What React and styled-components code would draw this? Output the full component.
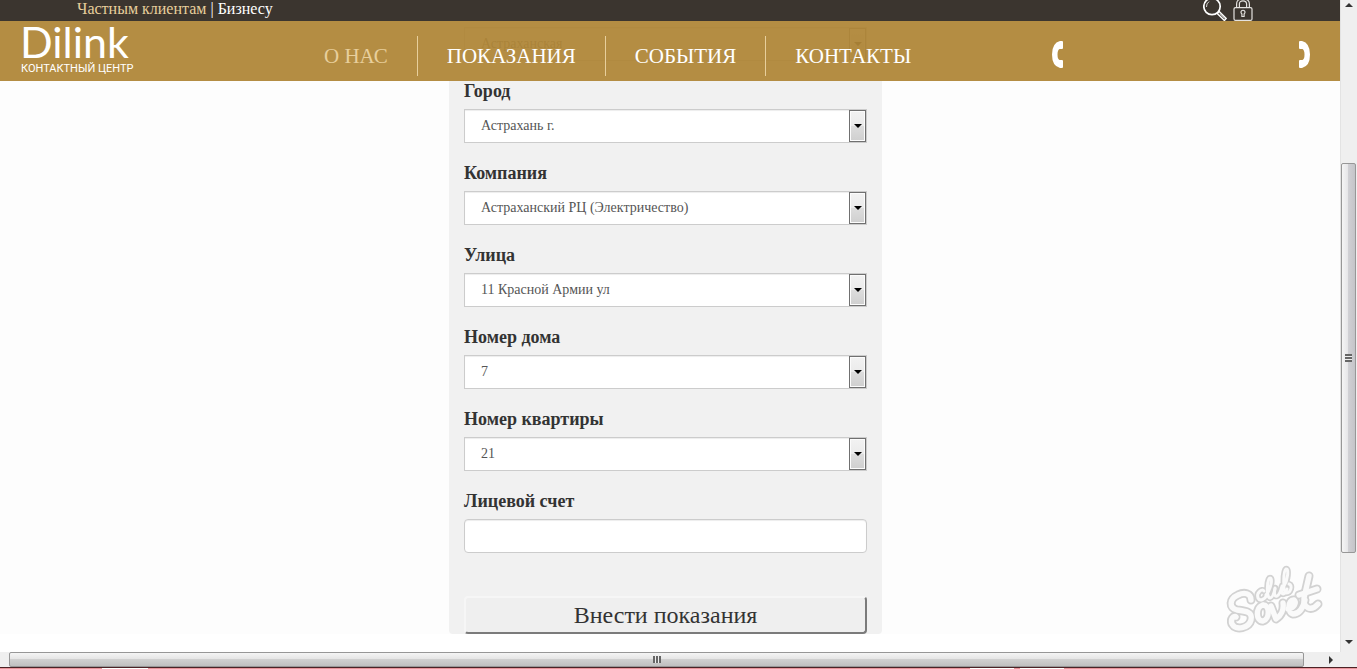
import React, { useState } from 'react';
import styled, { createGlobalStyle } from 'styled-components';

const serif = '"Liberation Serif", "Times New Roman", serif';
const logoFont = 'Lato, "Open Sans", sans-serif';

const fields = [
  { id: 'region', label: 'Область', value: 'Астраханская', hidden: true },
  { id: 'city', label: 'Город', value: 'Астрахань г.' },
  { id: 'company', label: 'Компания', value: 'Астраханский РЦ (Электричество)' },
  { id: 'street', label: 'Улица', value: '11 Красной Армии ул' },
  { id: 'house', label: 'Номер дома', value: '7' },
  { id: 'flat', label: 'Номер квартиры', value: '21' },
];

const SearchIcon = () => (
  <svg width="24" height="21" viewBox="0 0 24 21" fill="none" stroke="#fff">
    <circle cx="9" cy="6.5" r="8.2" strokeWidth="1.7" />
    <path d="M3.5 7A6 6 0 0 1 6 1.6" strokeWidth="0.8" />
    <path d="M14.2 13.4l2-2 7 7-1.8 2.1z" strokeWidth="1.4" />
    <path d="M16.5 13.7l5 5" strokeWidth="0.7" />
  </svg>
);

const LockIcon = () => (
  <svg width="20" height="21" viewBox="0 0 20 21" fill="none" stroke="#e4e2df" strokeWidth="1.2">
    <rect x="1" y="7.6" width="18" height="12.8" rx="1.5" />
    <path d="M3.6 7.5V4C3.6 1 5-1 10-1s6.400 2 6.400 5v3.500M6.400 7.500V4c0-2 1.200-3.200 3.600-3.200s3.600 1.200 3.600 3.200v3.500" />
    <path d="M8.900 16.500v-2.600a2 2 0 1 1 2.200 0v2.600z" />
  </svg>
);

const PhoneIcon = ({ flip }) => (
  <svg width="11" height="27" viewBox="0 0 11 27" fill="#fff">
    <path
      transform={flip ? 'matrix(-1 0 0 1 11 0)' : undefined}
      d="M8 0h2Q11 0 11 1v6Q11 8 10 8H7.500Q5.500 9 5.500 13.500T7.500 19H10Q11 19 11 20v6Q11 27 10 27H8Q0 25 0 13.500T8 0z"
    />
  </svg>
);

const Arrow = ({ dir }) => {
  const d = {
    up: 'M0 6L4 2l4 4z',
    down: 'M0 2l4 4 4-4z',
    right: 'M2 0l4 4-4 4z',
  };
  return <svg width="8" height="8" viewBox="0 0 8 8" fill="#333"><path d={d[dir]} /></svg>;
};

// handwritten lettering: grey outline first, pale core over it
const bigStrokes = [
  'M29 38C29 31 22 30 16 33C7 37 7 46 15 48C24 49 31 50 29 58C27 66 14 69 10 62C8 57 12 53 14 55',
  'M41 43C33 45 34 60 41 59C48 57 48 43 41 43',
  'M49 44L54 57C59 54 62 48 61 41',
  'M66 47C72 46 75 41 72 38C66 37 65 51 71 52C77 52 81 46 83 38',
  'M77 33L95 27',
  'M87 14L82 36C81 46 89 50 96 42',
];
const smallStrokes = [
  'M42 29C40 26 34 31 36 36C38 40 43 37 45 33',
  'M44 33C49 27 51 16 48 16C45 16 44 36 48 36C50 36 52 31 53 27',
  'M53 26C52 31 52 35 55 34C58 33 59 28 60 24L60 31C61 34 64 30 65 27',
  'M62 24C66 18 67 6 64 7C61 9 61 30 64 31C69 31 71 23 67 22',
];

const Watermark = () => (
  <svg width="105" height="75" viewBox="0 0 105 75" fill="none" strokeLinecap="round" strokeLinejoin="round">
    <g stroke="#d2d2d2">
      {bigStrokes.map((d) => <path key={d} d={d} strokeWidth="9" />)}
      {smallStrokes.map((d) => <path key={d} d={d} strokeWidth="6.4" />)}
    </g>
    <g stroke="#fafafa">
      {bigStrokes.map((d) => <path key={d} d={d} strokeWidth="5.4" />)}
      {smallStrokes.map((d) => <path key={d} d={d} strokeWidth="3" />)}
    </g>
  </svg>
);

function App() {
  const [account, setAccount] = useState('');

  return (
    <Frame>
      <GlobalStyle />
      <Viewport>
        <Header>
          <TopBar>
            <Audience>
              <TopLink href="#private" $active>Частным клиентам</TopLink>
              <i>|</i>
              <TopLink href="#business">Бизнесу</TopLink>
            </Audience>
            <Tools>
              <IconButton aria-label="Поиск"><SearchIcon /></IconButton>
              <IconButton aria-label="Вход"><LockIcon /></IconButton>
            </Tools>
          </TopBar>
          <NavBar>
            <Logo href="#home">
              <LogoName>Dilink</LogoName>
              <LogoSub>КОНТАКТНЫЙ ЦЕНТР</LogoSub>
            </Logo>
            <Nav>
              <NavLink href="#about" $active>О НАС</NavLink>
              <NavLink href="#readings">ПОКАЗАНИЯ</NavLink>
              <NavLink href="#events">СОБЫТИЯ</NavLink>
              <NavLink href="#contacts">КОНТАКТЫ</NavLink>
            </Nav>
            <Phones>
              <PhoneIcon />
              <PhoneIcon flip />
            </Phones>
          </NavBar>
        </Header>
        <Content>
          <Form onSubmit={(e) => e.preventDefault()}>
            {fields.map(({ id, label, value, hidden }) => (
              <React.Fragment key={id}>
                {!hidden && <Label htmlFor={id}>{label}</Label>}
                <SelectBox>
                  <Select id={id} aria-label={label} defaultValue={value}>
                    <option>{value}</option>
                  </Select>
                  <DropMark><Arrow dir="down" /></DropMark>
                </SelectBox>
              </React.Fragment>
            ))}
            <Label htmlFor="account">Лицевой счет</Label>
            <Input id="account" value={account} onChange={(e) => setAccount(e.target.value)} />
            <Submit type="submit">Внести показания</Submit>
          </Form>
        </Content>
        <Mark><Watermark /></Mark>
      </Viewport>
      <VScroll>
        <Arrow dir="up" />
        <VTrack>
          <VThumb><Grip $vertical /></VThumb>
        </VTrack>
        <Arrow dir="down" />
      </VScroll>
      <HScroll>
        <HThumb><Grip /></HThumb>
        <Arrow dir="right" />
      </HScroll>
      <Edge />
    </Frame>
  );
}

const GlobalStyle = createGlobalStyle`
  * {
    box-sizing: border-box;
  }
  body {
    margin: 0;
    background: #fff;
    font-family: ${serif};
  }
  svg {
    display: block;
    flex: none;
  }
`;

const Frame = styled.div`
  display: grid;
  grid-template-columns: minmax(0, 1fr) 17px;
  grid-template-rows: minmax(0, 1fr) 15px 2px;
  height: 100vh;
`;

const Viewport = styled.div`
  position: relative;
  overflow: hidden;
`;

const Header = styled.header`
  position: absolute;
  top: 0;
  left: 0;
  right: 0;
  z-index: 2;
`;

const TopBar = styled.div`
  display: flex;
  justify-content: space-between;
  height: 21px;
  padding: 0 87px 0 77px;
  background: #3b352f;
`;

const Audience = styled.div`
  display: flex;
  gap: 4px;
  font-size: 16px;
  line-height: 18px;
  i {
    color: #fff;
    font-style: normal;
  }
`;

const TopLink = styled.a`
  color: ${({ $active }) => ($active ? '#e8cf9c' : '#fff')};
  text-decoration: none;
`;

const Tools = styled.div`
  display: flex;
  gap: 6px;
`;

const IconButton = styled.button`
  padding: 0;
  border: 0;
  background: none;
`;

const NavBar = styled.div`
  display: flex;
  height: 60px;
  padding: 0 30px 0 20px;
  background: rgba(175, 134, 55, 0.94);
`;

const Logo = styled.a`
  display: flex;
  flex-direction: column;
  width: 275px;
  color: #fff;
  font-family: ${logoFont};
  text-decoration: none;
`;

const LogoName = styled.span`
  font-size: 43px;
  line-height: 42px;
`;

const LogoSub = styled.span`
  padding-left: 1px;
  font-family: Roboto, sans-serif;
  font-size: 11px;
  line-height: 12px;
`;

const Nav = styled.nav`
  display: flex;
  padding: 15px 0 5px;
`;

const NavLink = styled.a`
  padding: 0 29px;
  border-left: 1px solid #e8cf9c;
  color: ${({ $active }) => ($active ? '#e8cf9c' : '#fff')};
  font-size: 21px;
  line-height: 40px;
  text-decoration: none;
  &:first-child {
    border-left: 0;
  }
`;

const Phones = styled.div`
  display: flex;
  justify-content: space-between;
  width: 258px;
  margin-left: auto;
  padding-top: 20px;
`;

const Content = styled.main`
  padding-right: 9px;
  background: #fdfdfd;
`;

const Form = styled.form`
  display: flex;
  flex-direction: column;
  max-width: 433px;
  margin: 0 auto;
  padding: 27px 15px 0;
  border-radius: 4px;
  background: #f1f1f1;
`;

const Label = styled.label`
  margin: 18px 0 6px;
  color: #333;
  font-size: 18px;
  font-weight: bold;
  line-height: 24px;
`;

const SelectBox = styled.div`
  display: flex;
  height: 34px;
  border: 1px solid #ccc;
  background: #fff;
  box-shadow: inset 0 1px 1px rgba(0, 0, 0, 0.075);
`;

const Select = styled.select`
  appearance: none;
  flex: 1;
  padding: 0 16px 2px;
  border: 0;
  background: transparent;
  color: #555;
  font: 14px ${serif};
`;

const DropMark = styled.span`
  display: flex;
  align-items: center;
  justify-content: center;
  width: 17px;
  border: 1px solid #707070;
  background: linear-gradient(#f2f2f2 0%, #ebebeb 50%, #ddd 50%, #cfcfcf 100%);
  box-shadow: inset 0 0 0 1px #fcfcfc;
  pointer-events: none;
  svg {
    fill: #000;
  }
`;

const Input = styled.input`
  height: 34px;
  padding: 6px 12px;
  border: 1px solid #ccc;
  border-radius: 4px;
  background: #fff;
  box-shadow: inset 0 1px 1px rgba(0, 0, 0, 0.075);
  font: 14px ${serif};
`;

const Submit = styled.button`
  height: 38px;
  margin-top: 43px;
  padding: 0;
  border: 2px solid;
  border-color: #f6f6f6 #7b7b7b #7b7b7b #f6f6f6;
  border-radius: 4px;
  background: #efefef;
  color: #333;
  font: 24px ${serif};
`;

const Mark = styled.div`
  position: absolute;
  right: 13px;
  bottom: 15px;
`;

const VScroll = styled.div`
  display: flex;
  flex-direction: column;
  align-items: center;
  padding: 1px 1px 6px 0;
  border-left: 1px solid #e3e3e3;
  background: #efefef;
`;

const VTrack = styled.div`
  flex: 1;
  align-self: stretch;
  padding-top: 154px;
`;

const VThumb = styled.div`
  display: flex;
  align-items: center;
  justify-content: center;
  height: 83%;
  max-height: 390px;
  border: 1px solid #979797;
  border-radius: 2px;
  background: linear-gradient(90deg, #f5f5f5, #e6e6e8 45%, #d0d0d4 50%, #c4c4c8);
`;

const HScroll = styled.div`
  grid-column: 1 / -1;
  display: flex;
  align-items: center;
  gap: 23px;
  padding: 0 22px 0 9px;
  background: #efefef;
`;

const HThumb = styled.div`
  display: flex;
  flex: 1;
  align-items: center;
  justify-content: center;
  height: 15px;
  border: 1px solid #979797;
  border-radius: 2px;
  background: linear-gradient(#f5f5f5, #e6e6e6 45%, #d0d0d0 50%, #c0c0c0);
`;

const Grip = styled.span`
  width: ${({ $vertical }) => ($vertical ? 7 : 8)}px;
  height: ${({ $vertical }) => ($vertical ? 8 : 7)}px;
  background: repeating-linear-gradient(
    ${({ $vertical }) => ($vertical ? '180deg' : '90deg')},
    #666 0 2px,
    #eee 2px 3px
  );
`;

const Edge = styled.div`
  grid-column: 1 / -1;
  border-top: 1px solid #4b2226;
  background: linear-gradient(90deg, transparent 102px, #fff 102px 148px, transparent 148px 970px, #fff 970px 1014px, transparent 1014px 1020px, #fff 1020px 1064px, transparent 1064px), #e8949a;
`;

export default App;
